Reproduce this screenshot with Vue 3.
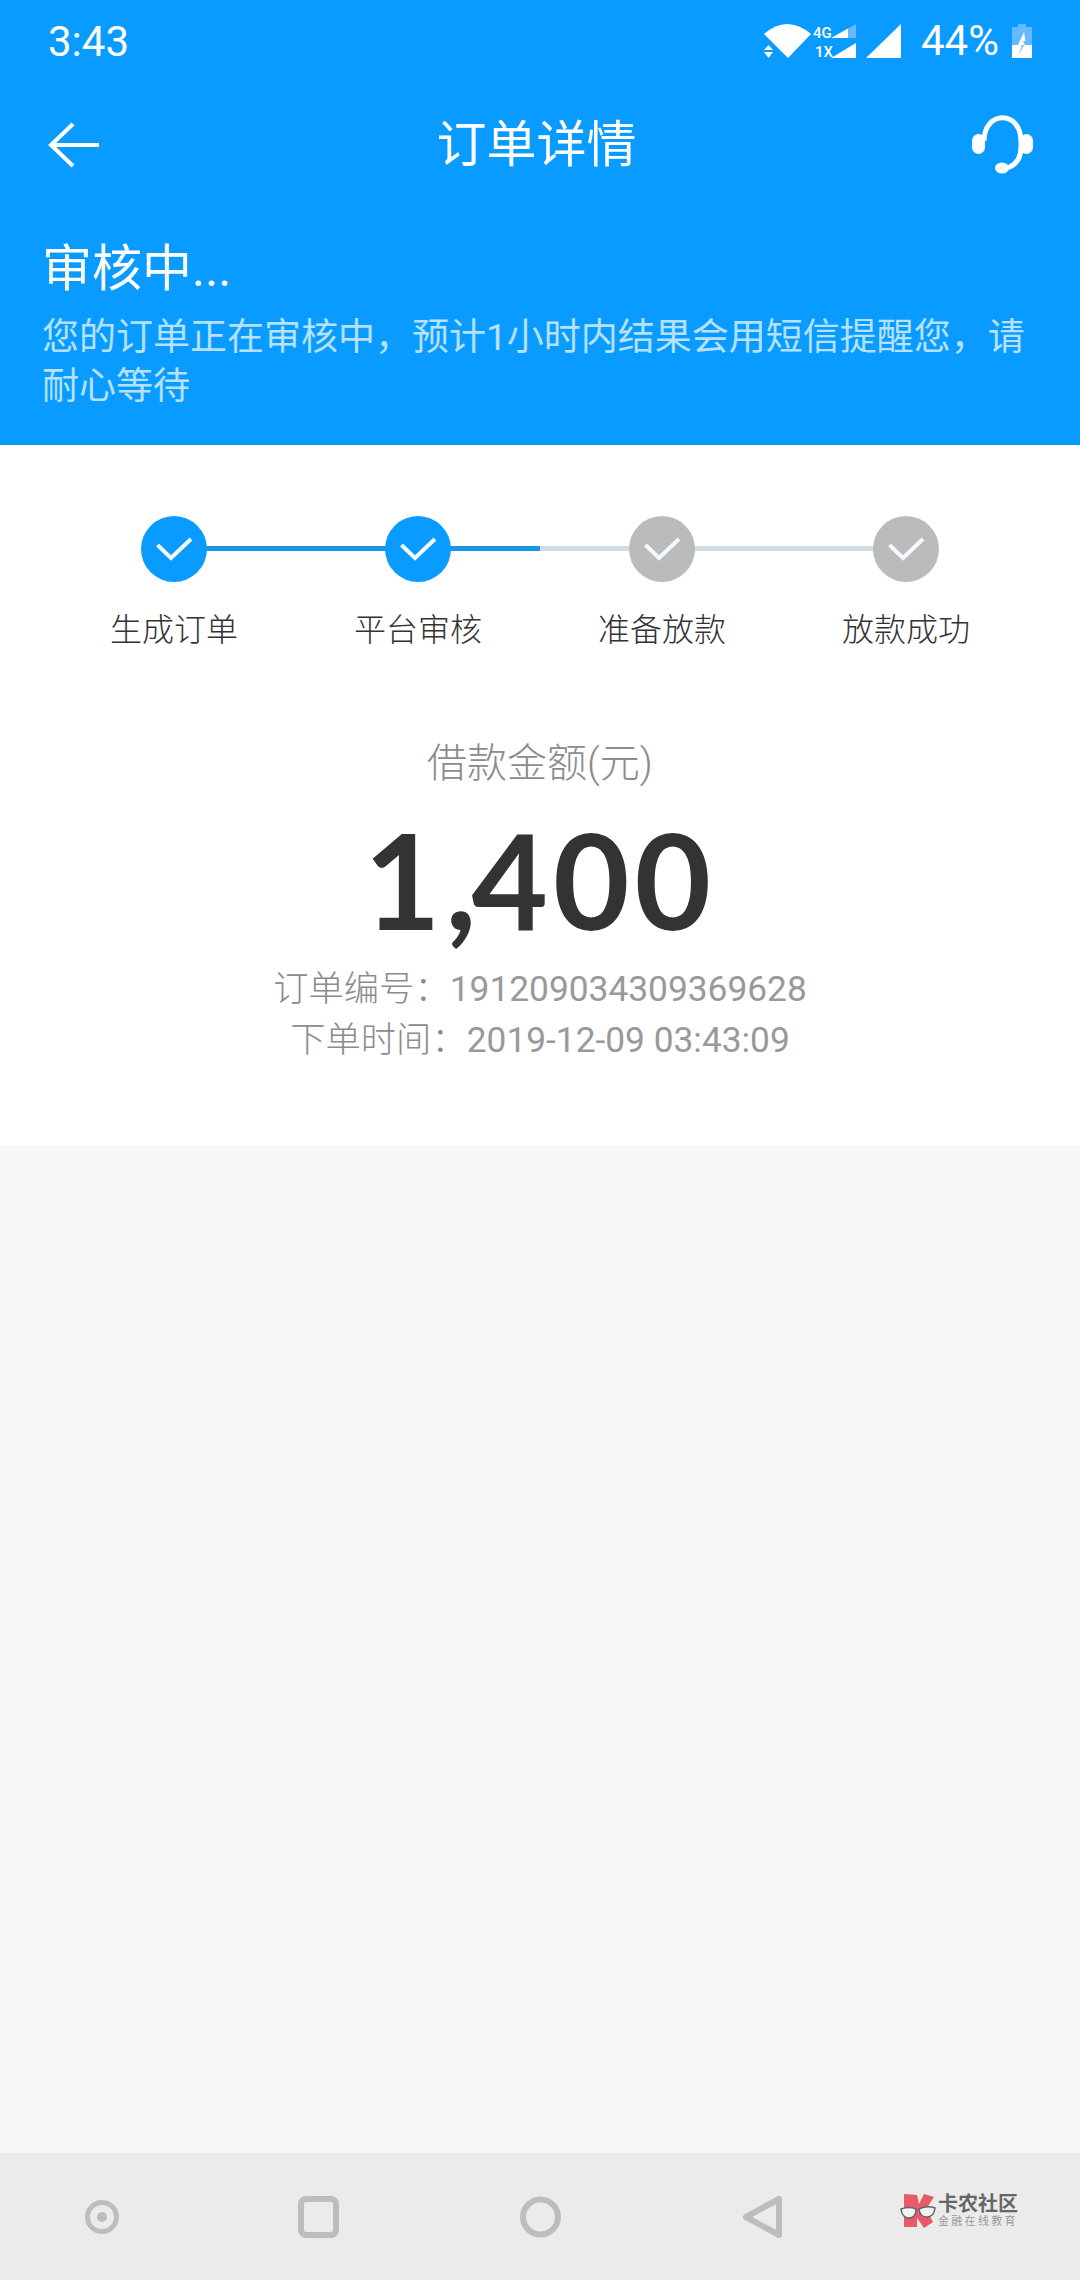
<script setup>
const steps = [
  { label: '生成订单', done: true, left: '', right: 'on' },
  { label: '平台审核', done: true, left: 'on', right: 'on' },
  { label: '准备放款', done: false, left: 'off', right: 'off' },
  { label: '放款成功', done: false, left: 'off', right: '' }
]
</script>

<template>
  <div class="page">
    <header class="head">
      <div class="status">
        <span class="time">3:43</span>
        <div class="status-right">
          <svg class="signals" width="137" height="38" viewBox="0 0 137 38">
            <path d="M0 10 Q23 -10 47 10 L24 34 Z" fill="#fff" />
            <path d="M4.500 21 L9 26 H0 Z M0 28 H9 L4.500 34 Z" fill="#fff" />
            <text x="49" y="14" class="net">4G</text>
            <text x="51" y="33" class="net">1X</text>
            <path d="M67 14 L84 4.500 V14 Z" fill="#fff" />
            <path d="M84 4.500 L92 0 V14 H84 Z" fill="#66b8ff" />
            <path d="M67 34 L92 19 V34 Z" fill="#fff" />
            <path d="M102 34 L137 0 V34 Z" fill="#fff" />
          </svg>
          <span class="pct">44%</span>
          <svg width="20" height="34" viewBox="0 0 20 34">
            <path d="M6 0 H14 V3 H20 V21 H0 V3 H6 Z" fill="#66b8ff" />
            <rect y="21" width="20" height="13" fill="#fff" />
            <path d="M12 8 L6 21 H10 L7 31 L9.500 21 H13 L11 17 H13.500 Z" fill="#fff" />
            <path d="M10 21 L6.500 31 L12 21 Z" fill="#66b8ff" />
          </svg>
        </div>
      </div>

      <div class="toolbar">
        <svg width="51" height="46" viewBox="0 0 51 46" fill="none" stroke="#fff" stroke-width="4">
          <path d="M25 2 L3 23 L25 44 M3 23 H51" />
        </svg>
        <h1 class="title">订单详情</h1>
        <svg class="support" width="61" height="60" viewBox="0 0 61 60" fill="none">
          <path d="M12 26 C12 -5 49 -5 49 26 V32 C49 45 42 52 31 54" stroke="#fff" stroke-width="5" />
          <rect x="0" y="19" width="13" height="20" rx="6.500" fill="#fff" />
          <rect x="48" y="19" width="13" height="20" rx="6.500" fill="#fff" />
          <ellipse cx="30" cy="53" rx="7" ry="5.500" fill="#fff" />
        </svg>
      </div>

      <div class="notice">
        <h2 class="notice-title">审核中...</h2>
        <p class="notice-text">您的订单正在审核中，预计1小时内结果会用短信提醒您，请耐心等待</p>
      </div>
    </header>

    <section class="card">
      <div class="steps">
        <div v-for="step in steps" :key="step.label" class="step">
          <span v-if="step.left" class="line line-left" :class="step.left"></span>
          <span v-if="step.right" class="line line-right" :class="step.right"></span>
          <span class="dot" :class="{ done: step.done }">
            <svg width="66" height="66" viewBox="0 0 66 66" fill="none">
              <path d="M16.500 29 L30 42 L50 23" stroke="#f2f9ff" stroke-width="4" />
            </svg>
          </span>
          <span class="step-label">{{ step.label }}</span>
        </div>
      </div>

      <div class="amount-label">借款金额(元)</div>
      <div class="amount">1<span class="comma">,</span>400</div>
      <div class="meta"><span class="light">订单编号：</span>191209034309369628</div>
      <div class="meta"><span class="light">下单时间：</span>2019-12-09 03:43:09</div>
    </section>

    <div class="empty"></div>

    <nav class="nav">
      <svg class="nav-a" width="34" height="34" viewBox="0 0 34 34" fill="none">
        <circle cx="17" cy="17" r="14.500" stroke="#bdbdbd" stroke-width="5" />
        <circle cx="17" cy="17" r="5" fill="#bdbdbd" />
      </svg>
      <svg class="nav-b" width="41" height="42" viewBox="0 0 41 42" fill="none">
        <rect x="3" y="3" width="35" height="36" rx="5" stroke="#bdbdbd" stroke-width="6" />
      </svg>
      <svg class="nav-c" width="41" height="42" viewBox="0 0 41 42" fill="none">
        <circle cx="20.500" cy="21" r="17.500" stroke="#bdbdbd" stroke-width="6" />
      </svg>
      <svg class="nav-d" width="39" height="42" viewBox="0 0 39 42" fill="none">
        <path d="M36 3 V39 L3 21 Z" stroke="#bdbdbd" stroke-width="6" stroke-linejoin="round" />
      </svg>
      <div class="logo">
        <svg width="36" height="34" viewBox="0 0 36 34">
          <path d="M4 0 L17 1 L19 10 L24 0 L34 3 L26 15 L33 28 L24 34 L17 24 V33 H4 Z" fill="#e85a68" />
          <g fill="#f2f2f2" stroke="#666" stroke-width="1.500">
            <path d="M1 15 Q9 12 16 15 Q16 24 9 24 Q2 24 1 15 Z" />
            <path d="M19 15 Q27 11 35 14 Q34 23 27 23 Q20 23 19 15 Z" />
          </g>
        </svg>
        <div class="logo-text">
          <span class="logo-name">卡农社区</span>
          <span class="logo-sub">金融在线教育</span>
        </div>
      </div>
    </nav>
  </div>
</template>

<style scoped>
.page {
  width: 1080px;
  height: 2280px;
  display: flex;
  flex-direction: column;
  font-family: Roboto, "Noto Sans CJK SC", sans-serif;
  background: #f8f8f8;
}
.head {
  background: #099bff;
  color: #fff;
  height: 445px;
  flex: none;
}
.status {
  height: 84px;
  padding: 0 48px;
  display: flex;
  align-items: center;
  justify-content: space-between;
}
.time,
.pct {
  font-size: 42px;
  line-height: 48px;
}
.status-right {
  display: flex;
  align-items: center;
  padding-bottom: 2px;
}
.signals {
  margin-bottom: -4px;
}
.pct {
  margin-left: 20px;
  margin-right: 13px;
}
.net {
  font-family: Roboto, sans-serif;
  font-size: 15px;
  font-weight: 500;
  fill: #fff;
}
.toolbar {
  height: 122px;
  padding: 0 55px 0 48px;
  display: grid;
  grid-template-columns: 1fr auto 1fr;
  align-items: center;
}
.support {
  justify-self: end;
  margin-right: -8px;
}
.title {
  margin: 0;
  font-size: 50px;
  font-weight: 400;
  line-height: 60px;
}
.notice {
  padding: 33px 44px 0 42px;
}
.notice-title {
  margin: 0;
  font-size: 50px;
  font-weight: 400;
  line-height: 60px;
}
.notice-text {
  margin: 14px 0 0;
  font-size: 37px;
  line-height: 49px;
  color: #b5e1ff;
}
.card {
  flex: none;
  height: 700px;
  background: #fff;
  padding-top: 71px;
  box-sizing: border-box;
  text-align: center;
}
.steps {
  display: grid;
  grid-template-columns: repeat(4, 244px);
  padding: 0 52px;
}
.step {
  position: relative;
  display: flex;
  flex-direction: column;
  align-items: center;
}
.line {
  position: absolute;
  top: 30px;
  height: 5px;
  width: 50%;
}
.line-left {
  left: 0;
}
.line-right {
  left: 50%;
}
.line.on {
  background: #1b96e6;
}
.line.off {
  background: #d0dee4;
}
.dot {
  position: relative;
  width: 66px;
  height: 66px;
  border-radius: 50%;
  background: #bbb;
}
.dot.done {
  background: #099bff;
}
.dot svg {
  display: block;
}
.step-label {
  margin-top: 26px;
  font-size: 32px;
  font-weight: 300;
  line-height: 44px;
  color: #333;
  white-space: nowrap;
}
.amount-label {
  margin-top: 84px;
  font-size: 40px;
  font-weight: 300;
  line-height: 56px;
  color: #8c8c8c;
}
.amount {
  margin-top: 17px;
  font-family: Lato, Roboto, sans-serif;
  font-size: 132px;
  font-weight: 700;
  line-height: 140px;
  letter-spacing: 5px;
  color: #333;
}
.comma {
  letter-spacing: -5px;
}
.meta {
  font-size: 35.300px;
  line-height: 51px;
  color: #999;
}
.light {
  font-weight: 300;
  color: #8c8c8c;
}
.amount + .meta {
  margin-top: 15px;
}
.empty {
  flex: 1;
}
.nav {
  flex: none;
  height: 127px;
  background: #ebebeb;
  display: flex;
  align-items: center;
  padding-left: 85px;
}
.nav-b {
  margin-left: 179px;
}
.nav-c {
  margin-left: 181px;
}
.nav-d {
  margin-left: 182px;
}
.logo {
  display: flex;
  align-items: center;
  margin-left: 118px;
  margin-top: -11px;
}
.logo-text {
  display: flex;
  flex-direction: column;
  margin-left: 2px;
}
.logo-name {
  font-size: 20px;
  font-weight: 700;
  line-height: 22px;
  color: #666;
}
.logo-sub {
  font-size: 11px;
  line-height: 14px;
  letter-spacing: 2.300px;
  color: #999;
}
</style>
